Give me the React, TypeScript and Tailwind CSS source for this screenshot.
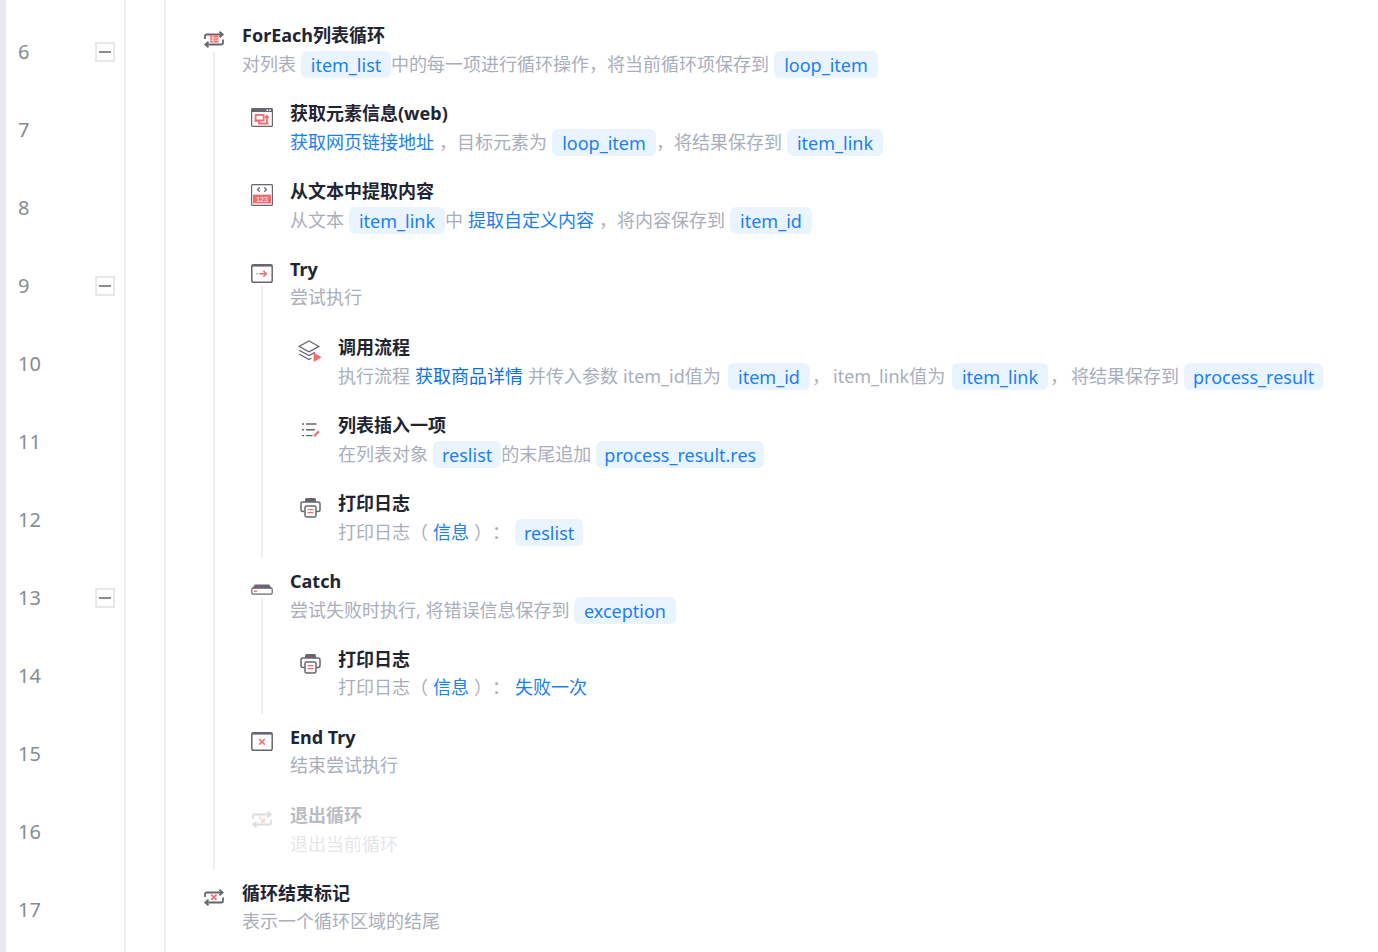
import type { ReactNode } from 'react';

const GRAY = '#66666e';
const RED = '#f56c6c';

function LoopArrows({ color = GRAY }: { color?: string }) {
  return (
    <g fill="none" stroke={color} strokeWidth="1.8">
      <path d="M1 8V5.2a1.7 1.7 0 0 1 1.7-1.7H18.5" />
      <path d="M15.5 0.8l3.2 2.7-3.2 2.7" />
      <path d="M19 8.5v3.3a1.7 1.7 0 0 1-1.7 1.7H1.5" />
      <path d="M4.5 10.8l-3.2 2.7 3.2 2.7" />
    </g>
  );
}

function ForEachIcon() {
  return (
    <svg width="20" height="17" viewBox="0 0 20 17">
      <LoopArrows />
      <rect x="6" y="4.5" width="8.5" height="7" fill={RED} />
      <path d="M6 6.8h8.5M6 9.2h8.5M9 4.5v7" stroke="#fff" strokeWidth="0.7" />
    </svg>
  );
}

function LoopEndIcon() {
  return (
    <svg width="20" height="17" viewBox="0 0 20 17">
      <LoopArrows />
      <path d="M7.3 5.6l5.2 5.2M12.5 5.6l-5.2 5.2" stroke={RED} strokeWidth="1.8" />
    </svg>
  );
}

function BreakIcon() {
  return (
    <svg width="20" height="17" viewBox="0 0 20 17" className="opacity-30">
      <LoopArrows color="#8f8f96" />
      <path d="M7 5.5l5 5M12.2 7.2v3.5H8.8" fill="none" stroke={RED} strokeWidth="1.4" />
    </svg>
  );
}

function WebIcon() {
  return (
    <svg width="22" height="19" viewBox="0 0 22 19">
      <rect x="0.6" y="0.6" width="20.8" height="17.8" rx="1" fill="#fff" stroke={GRAY} strokeWidth="1.2" />
      <rect x="0.6" y="0.6" width="20.8" height="3.4" fill={GRAY} />
      <path d="M15.5 1.6h1.6v1.4h-1.6zM18.2 1.6h1.6v1.4h-1.6z" fill="#fff" />
      <g fill="none" stroke={RED} strokeWidth="1.8">
        <rect x="4.6" y="7" width="8" height="5.4" />
        <path d="M3.5 12.9h6M8 12.9v2.6h9.5M15.8 14.5V8M13.8 10l2-2.2 2 2.2" />
      </g>
    </svg>
  );
}

function CodeIcon() {
  return (
    <svg width="22" height="22" viewBox="0 0 22 22">
      <rect x="0.6" y="0.6" width="20.8" height="20.8" rx="1" fill="#fff" stroke={GRAY} strokeWidth="1.2" />
      <path d="M8.8 3.4L6.6 5.6l2.2 2.2M13.2 3.4l2.2 2.2-2.2 2.2" fill="none" stroke={GRAY} strokeWidth="1.3" />
      <rect x="2" y="10.6" width="18" height="8.8" fill={RED} />
      <text x="11" y="17.6" textAnchor="middle" fontSize="7" fill="#fff" fontFamily="Liberation Sans, sans-serif">123</text>
    </svg>
  );
}

function TryIcon() {
  return (
    <svg width="22" height="19" viewBox="0 0 22 19">
      <rect x="0.8" y="0.8" width="20.4" height="17.4" rx="1.8" fill="#fff" stroke={GRAY} strokeWidth="1.5" />
      <rect x="0.8" y="0.8" width="20.4" height="1.8" fill={GRAY} />
      <path d="M5.5 9.7h1.2M8.2 9.7h6.6" stroke={RED} strokeWidth="1.5" />
      <path d="M12.4 6.8l3 2.9-3 2.9" fill="none" stroke={RED} strokeWidth="1.5" />
    </svg>
  );
}

function StackIcon() {
  return (
    <svg width="24" height="23" viewBox="0 0 24 23">
      <g fill="none" stroke={GRAY} strokeWidth="1.2">
        <path d="M11 1l10 5.4-10 5.4L1 6.4z" />
        <path d="M1 10.2l10 5.4 6-3.2" />
        <path d="M1 14l10 5.6 2.4-1.3" />
      </g>
      <path d="M15.6 12.6l8 4.6-8 4.8z" fill={RED} />
    </svg>
  );
}

function ListIcon() {
  return (
    <svg width="20" height="16" viewBox="0 0 20 16" className="mt-[1px] ml-[2px]">
      <path d="M1 2h2M5 2h10.5M1 7.8h2M5 7.8h9M1 13.6h2M5 13.6h6.5" stroke={GRAY} strokeWidth="1.4" fill="none" />
      <path d="M13.2 14.2l4.6-5" stroke={RED} strokeWidth="2.2" fill="none" />
    </svg>
  );
}

function PrintIcon() {
  return (
    <svg width="21" height="21" viewBox="0 0 21 21">
      <path d="M5 5V2.6A1.6 1.6 0 0 1 6.6 1h7.8A1.6 1.6 0 0 1 16 2.6V5z" fill={GRAY} />
      <path d="M4.6 14.6H3a2 2 0 0 1-2-2V7a2 2 0 0 1 2-2h15a2 2 0 0 1 2 2v5.6a2 2 0 0 1-2 2h-1.6" fill="none" stroke={GRAY} strokeWidth="1.5" />
      <rect x="5" y="9" width="11" height="11" rx="1.4" fill="#fff" stroke={GRAY} strokeWidth="1.5" />
      <path d="M7.6 12.6h5.8M7.6 15.6h5.8" stroke={RED} strokeWidth="1.4" />
    </svg>
  );
}

function CatchIcon() {
  return (
    <svg width="22" height="11" viewBox="0 0 22 11" className="mt-[8px]">
      <path d="M4 0.5h14l3 4H1z" fill={GRAY} />
      <path d="M0.8 5.2a1 1 0 0 1 1-1h18.4a1 1 0 0 1 1 1v3.6a1.4 1.4 0 0 1-1.4 1.4H2.2a1.4 1.4 0 0 1-1.4-1.4z" fill="#fff" stroke={GRAY} strokeWidth="1.2" />
      <path d="M3 7.3h3" stroke={RED} strokeWidth="1.4" />
    </svg>
  );
}

function EndTryIcon() {
  return (
    <svg width="22" height="19" viewBox="0 0 22 19">
      <rect x="0.8" y="0.8" width="20.4" height="17.4" rx="1.8" fill="#fff" stroke={GRAY} strokeWidth="1.5" />
      <rect x="0.8" y="0.8" width="20.4" height="1.8" fill={GRAY} />
      <path d="M8.2 7l5.6 5.6M13.8 7l-5.6 5.6" stroke={RED} strokeWidth="1.5" />
    </svg>
  );
}

function Chip({ children, className = '' }: { children: ReactNode; className?: string }) {
  return (
    <span className={`ml-[5px] flex h-[27px] items-center justify-center rounded-[6px] bg-[#e9f4ff] px-[9px] pt-[2px] text-[18px] text-[#1a7ff2] ${className}`}>
      {children}
    </span>
  );
}

function Link({ children, className = '' }: { children: ReactNode; className?: string }) {
  return <span className={`text-[#1a7ff2] ${className}`}>{children}</span>;
}

interface StepProps {
  icon: ReactNode;
  title: string;
  desc: ReactNode;
  muted?: boolean;
  plain?: boolean;
  children?: ReactNode;
}

function Step({ icon, title, desc, muted, plain, children }: StepProps) {
  return (
    <div>
      <div className="flex h-[78px]">
        <div className="mr-[18px] flex h-[52px] w-5 shrink-0 items-center justify-center [&>svg]:shrink-0">{icon}</div>
        <div className={muted ? 'opacity-30' : ''}>
          <div className="mt-[9px] h-[26px] text-[18px] leading-[26px] font-bold text-[#1f2533]">{title}</div>
          <div className={`flex h-[28px] items-center text-[18px] whitespace-nowrap text-[#a9aebd] ${plain ? 'mt-[1px]' : 'mt-[2px]'}`}>
            {desc}
          </div>
        </div>
      </div>
      {children && (
        <div className="relative pl-[48px]">
          <span className="absolute top-[-39px] bottom-[1px] left-[9px] w-[2px] bg-[#eeeff4]" />
          {children}
        </div>
      )}
    </div>
  );
}

const lines: { n: number; fold?: boolean }[] = [
  { n: 6, fold: true },
  { n: 7 },
  { n: 8 },
  { n: 9, fold: true },
  { n: 10 },
  { n: 11 },
  { n: 12 },
  { n: 13, fold: true },
  { n: 14 },
  { n: 15 },
  { n: 16 },
  { n: 17 },
];

export default function App() {
  return (
    <div className="flex h-[952px] overflow-hidden bg-white [font-family:'Noto_Sans','Noto_Sans_CJK_SC',sans-serif]">
      <div className="w-[6px] shrink-0 bg-[#e9eaf0]" />
      <div className="w-[120px] shrink-0 border-r-2 border-[#f0f0f5] pt-[13px]">
        {lines.map((line) => (
          <div key={line.n} className="flex h-[78px] items-center pr-[9px] pl-3">
            <span className="flex-1 text-[20px] text-[#868b96]">{line.n}</span>
            {line.fold && (
              <span className="flex h-5 w-5 items-center justify-center border-2 border-[#e8e8e8]">
                <span className="h-[2px] w-3 bg-[#8c8c8c]" />
              </span>
            )}
          </div>
        ))}
      </div>
      <div className="w-[40px] shrink-0 border-r-[2px] border-[#f0f0f5]" />
      <div className="min-w-0 flex-1 pt-[13px] pl-[38px]">
        <Step
          icon={<ForEachIcon />}
          title="ForEach列表循环"
          desc={
            <>
              对列表<Chip className="w-[90px]">item_list</Chip>
              <span className="w-[378px]">中的每一项进行循环操作，将当前循环项保存到</span>
              <Chip className="w-[104px]">loop_item</Chip>
            </>
          }
        >
          <Step
            icon={<WebIcon />}
            title="获取元素信息(web)"
            desc={
              <>
                <Link>获取网页链接地址</Link>
                <span className="ml-[5px]">，</span>目标元素为<Chip className="w-[104px]">loop_item</Chip>
                <span>，</span>将结果保存到<Chip className="w-[96px]">item_link</Chip>
              </>
            }
          />
          <Step
            icon={<CodeIcon />}
            title="从文本中提取内容"
            desc={
              <>
                从文本<Chip className="w-[96px]">item_link</Chip>
                <span>中</span>
                <Link className="ml-[5px]">提取自定义内容</Link>
                <span className="ml-[5px]">，</span>将内容保存到<Chip className="w-[82px]">item_id</Chip>
              </>
            }
          />
          <Step icon={<TryIcon />} title="Try" desc="尝试执行" plain>
            <Step
              icon={<StackIcon />}
              title="调用流程"
              desc={
                <>
                  执行流程
                  <span className="ml-[5px] text-[#0f6fe6]">获取商品详情</span>
                  <span className="ml-[5px]">并传入参数</span>
                  <span className="ml-[5px] w-[100px]">item_id值为</span>
                  <Chip className="w-[82px]">item_id</Chip>
                  <span className="ml-[2px]">，</span>
                  <span className="ml-[3px] w-[114px]">item_link值为</span>
                  <Chip className="w-[96px]">item_link</Chip>
                  <span className="ml-[2px]">，</span>
                  <span className="ml-[3px]">将结果保存到</span>
                  <Chip>process_result</Chip>
                </>
              }
            />
            <Step
              icon={<ListIcon />}
              title="列表插入一项"
              desc={
                <>
                  在列表对象<Chip>reslist</Chip>
                  的末尾追加<Chip className="w-[168px]">process_result.res</Chip>
                </>
              }
            />
            <Step
              icon={<PrintIcon />}
              title="打印日志"
              desc={
                <>
                  打印日志
                  <span>（</span>
                  <Link className="ml-[5px]">信息</Link>
                  <span className="ml-[5px]">）</span>
                  <span>：</span>
                  <Chip>reslist</Chip>
                </>
              }
            />
          </Step>
          <Step
            icon={<CatchIcon />}
            title="Catch"
            desc={
              <>
                <span className="w-[279px]">尝试失败时执行, 将错误信息保存到</span>
                <Chip className="w-[102px]">exception</Chip>
              </>
            }
          >
            <Step
              icon={<PrintIcon />}
              title="打印日志"
              plain
              desc={
                <>
                  打印日志
                  <span>（</span>
                  <Link className="ml-[5px]">信息</Link>
                  <span className="ml-[5px]">）</span>
                  <span>：</span>
                  <Link className="ml-[5px]">失败一次</Link>
                </>
              }
            />
          </Step>
          <Step icon={<EndTryIcon />} title="End Try" desc="结束尝试执行" plain />
          <Step icon={<BreakIcon />} title="退出循环" desc="退出当前循环" muted />
        </Step>
        <Step icon={<LoopEndIcon />} title="循环结束标记" desc="表示一个循环区域的结尾" plain />
      </div>
    </div>
  );
}
